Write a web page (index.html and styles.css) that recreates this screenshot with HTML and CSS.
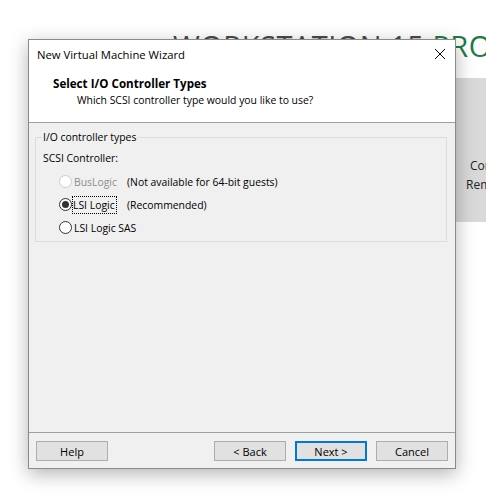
FILE: index.html
```html
<!DOCTYPE html>
<html lang="en">
<head>
    <meta charset="UTF-8">
    <title>New Virtual Machine Wizard</title>
    <link rel="stylesheet" href="styles.css">
</head>
<body>
    <!-- Workstation home screen behind the wizard -->
    <div class="home">
        <h1 class="brand">WORKSTATION 15 <span class="pro">PRO</span></h1>
        <div class="tiles">
            <p class="tile-line first">Connect to a</p>
            <p class="tile-line">Remote Server</p>
        </div>
    </div>

    <div class="dialog">
        <div class="titlebar">
            <span class="caption">New Virtual Machine Wizard</span>
            <svg class="close" width="12" height="12" viewBox="0 0 12 12">
                <path d="M1 1 L11 11 M11 1 L1 11" stroke="#000" stroke-width="1" fill="none"/>
            </svg>
        </div>

        <div class="header">
            <h2>Select I/O Controller Types</h2>
            <p>Which SCSI controller type would you like to use?</p>
        </div>

        <div class="content">
            <fieldset class="group">
                <legend>I/O controller types</legend>
                <div class="field-label">SCSI Controller:</div>
                <div class="options">
                    <label class="option disabled">
                        <input type="radio" name="scsi" disabled>
                        <span class="name">BusLogic</span>
                    </label>
                    <span class="note">(Not available for 64-bit guests)</span>

                    <label class="option">
                        <input type="radio" name="scsi" checked>
                        <span class="name focused">LSI Logic</span>
                    </label>
                    <span class="note">(Recommended)</span>

                    <label class="option">
                        <input type="radio" name="scsi">
                        <span class="name">LSI Logic SAS</span>
                    </label>
                    <span class="note"></span>
                </div>
            </fieldset>
        </div>

        <div class="footer">
            <button class="btn">Help</button>
            <div class="nav">
                <button class="btn">&lt; Back</button>
                <button class="btn default">Next &gt;</button>
                <button class="btn">Cancel</button>
            </div>
        </div>
    </div>
</body>
</html>
```

FILE: styles.css
```css
:root {
    --face: #f0f0f0;
    --line: #a0a0a0;
    --accent: #0078d7;
}

body {
    margin: 0;
    width: 486px;
    height: 503px;
    overflow: hidden;
    position: relative;
    background: white;
    font-family: 'Open Sans', 'Noto Sans', sans-serif;
    font-size: 10.4px;
    color: #000;
}

/* ---------- home screen ---------- */

.home {
    padding-top: 26px;
}

.brand {
    margin: 0 0 0 173px;
    font-family: 'Open Sans', sans-serif;
    font-weight: 400;
    font-size: 29px;
    line-height: 40px;
    letter-spacing: 0.5px;
    color: #4a4a4a;
    white-space: nowrap;
}

.brand .pro {
    color: #1f7a45;
}

.tiles {
    margin: 12px 0 0 160px;
    height: 144px;
    background: #d9d9d9;
    overflow: hidden;
    white-space: nowrap;
    font-size: 12px;
    color: #222;
}

.tile-line {
    margin: 0 0 0 306px;
    line-height: 19px;
}

.tile-line.first {
    padding-top: 78px;
    margin-left: 310px;
}

/* ---------- wizard dialog ---------- */

.dialog {
    position: absolute;
    left: 28px;
    top: 39px;
    width: 428px;
    height: 430px;
    box-sizing: border-box;
    border: 1px solid #8a8a8a;
    background: var(--face);
    box-shadow: 0 5px 18px rgba(0,0,0,0.3);
    display: flex;
    flex-direction: column;
}

.titlebar {
    height: 30px;
    box-sizing: border-box;
    background: white;
    display: flex;
    align-items: center;
    justify-content: space-between;
    padding: 0 9px 2px 8px;
}

.caption {
    font-size: 11.3px;
}

.header {
    height: 53px;
    background: white;
    border-bottom: 1px solid var(--line);
    box-sizing: border-box;
    padding: 6px 0 0 24px;
}

.header h2 {
    margin: 0;
    font-size: 11.6px;
    font-weight: 700;
    line-height: 16px;
}

.header p {
    margin: 0 0 0 24px;
    line-height: 16px;
}

.content {
    flex: 1;
    padding: 8px 8px 0 6px;
}

.group {
    margin: 0;
    padding: 0 7px;
    height: 111px;
    box-sizing: border-box;
    border: 1px solid #dcdcdc;
}

.group legend {
    padding: 0 1px;
    margin-left: -1px;
    line-height: 12px;
}

.field-label {
    line-height: 16px;
    margin-top: 7px;
}

.options {
    display: grid;
    grid-template-columns: 68px auto;
    grid-auto-rows: 23px;
    align-items: center;
    margin: 0 0 0 16px;
    padding-top: 4px;
    white-space: nowrap;
}

.option {
    display: flex;
    align-items: center;
    gap: 2px;
}

.option input {
    appearance: none;
    flex-shrink: 0;
    margin: 0;
    width: 13px;
    height: 13px;
    border: 1px solid #333;
    border-radius: 50%;
    background: white;
    box-sizing: border-box;
    display: grid;
    place-items: center;
}

.option input:checked::after {
    content: '';
    width: 7px;
    height: 7px;
    border-radius: 50%;
    background: #333;
}

.option.disabled {
    color: #8d8d8d;
}

.option.disabled input {
    border-color: #cccccc;
}

.name.focused {
    outline: 1px dotted #000;
    outline-offset: 0;
    padding: 0 1px 0 0;
    margin-left: -1px;
    line-height: 16px;
}

/* ---------- buttons ---------- */

.footer {
    border-top: 1px solid var(--line);
    height: 36px;
    box-sizing: border-box;
    display: flex;
    justify-content: space-between;
    align-items: flex-start;
    padding: 8px 7px 0 7px;
}

.nav {
    display: flex;
    gap: 9px;
}

.btn {
    width: 72px;
    height: 20px;
    box-sizing: border-box;
    border: 1px solid #adadad;
    background: #e1e1e1;
    font-family: inherit;
    font-size: 11px;
    color: #000;
    padding: 0;
}

.btn.default {
    border: 2px solid var(--accent);
}
```
